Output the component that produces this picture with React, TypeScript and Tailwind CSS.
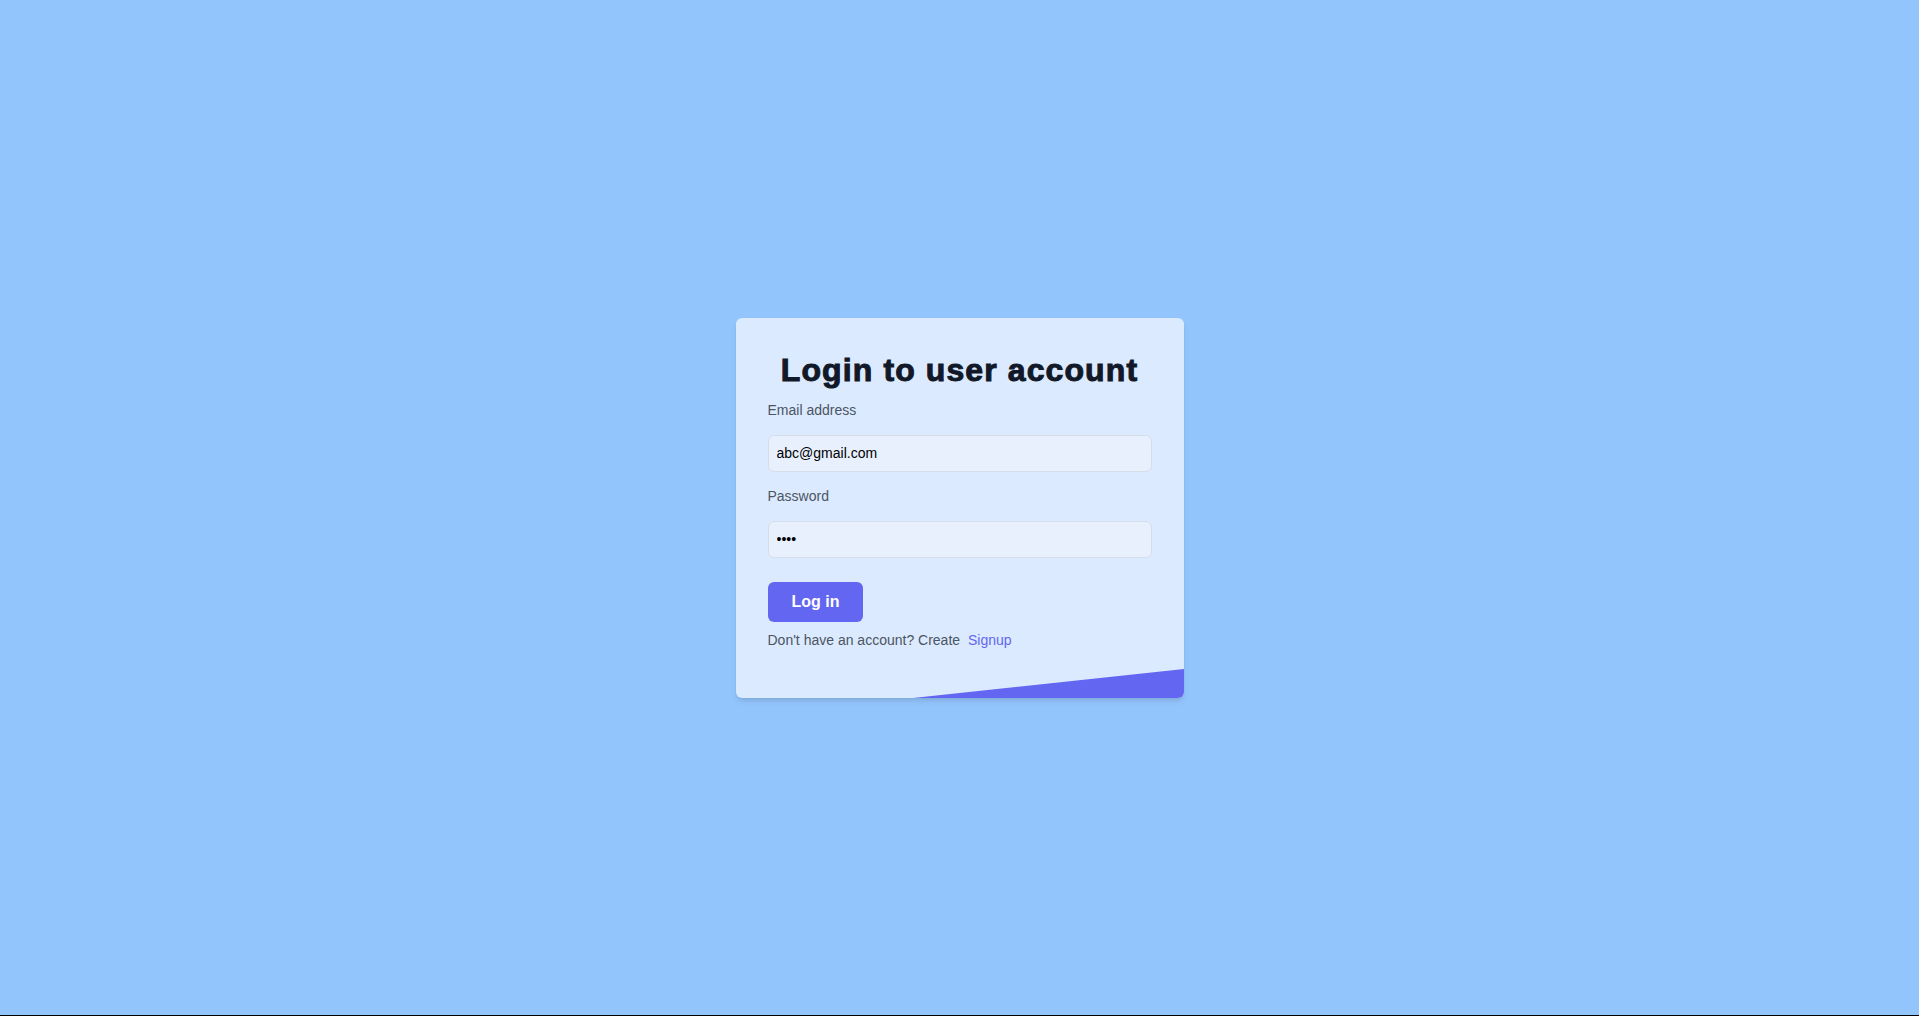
import React from "react";

export default function App() {
  return (
    <div className="flex h-screen w-full flex-col bg-[#93c5fd] [font-family:'Liberation_Sans',Arial,sans-serif]">
      <div className="flex flex-1 items-center justify-center">
        <div className="relative w-[448px] h-[380px] overflow-hidden rounded-md bg-[#dbeafe] px-8 pt-8 shadow-md">
          <h1 className="text-center text-[32px] leading-[40px] font-bold tracking-[1.1px] text-[#111827] [-webkit-text-stroke:1px_#111827]">
            Login to user account
          </h1>
          <form className="mt-[10px] flex flex-col" onSubmit={(e) => e.preventDefault()}>
            <label className="text-sm leading-5 text-[#4b5563]">Email address</label>
            <input
              type="email"
              defaultValue="abc@gmail.com"
              className="mt-[15px] h-[37px] w-full rounded-md border border-[#d5dde9] bg-[#e8f0fe] px-2 text-sm text-black outline-none"
            />
            <label className="mt-[14px] text-sm leading-5 text-[#4b5563]">Password</label>
            <input
              type="password"
              defaultValue="abcd"
              className="mt-[15px] h-[37px] w-full rounded-md border border-[#d5dde9] bg-[#e8f0fe] px-2 text-sm text-black outline-none"
            />
            <div className="mt-[24px]">
              <button
                type="submit"
                className="h-10 rounded-md bg-[#6366f1] px-6 text-base font-bold text-white"
              >
                Log in
              </button>
            </div>
            <p className="mt-2 text-sm leading-5 text-[#4b5563]">
              Don't have an account? Create <a href="#" className="ml-1 text-[#6366f1]">Signup</a>
            </p>
          </form>
          <svg
            className="absolute bottom-0 left-0"
            width="448"
            height="29"
            viewBox="0 0 448 29"
            preserveAspectRatio="none"
          >
            <polygon points="177,29 448,0 448,29" fill="#6366f1" />
          </svg>
        </div>
      </div>
      <div className="h-px w-full bg-black" />
    </div>
  );
}
